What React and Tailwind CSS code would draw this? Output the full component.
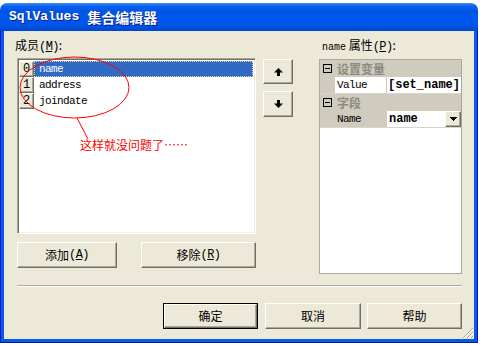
import React from "react";

const CJK = "font-['Noto_Sans_CJK_SC',sans-serif]";

function RaisedBtn({ className, children }) {
  return (
    <div
      className={
        "flex items-center justify-center bg-[#ECE9D8] border border-t-white border-l-white border-r-[#716F64] border-b-[#716F64] shadow-[inset_-1px_-1px_0_#ACA899] text-[12px] leading-[12px] text-black font-['Noto_Sans_CJK_SC',sans-serif] " +
        className
      }
    >
      {children}
    </div>
  );
}

function Mnemonic({ ch }) {
  return (
    <span className="font-['Liberation_Mono',monospace] text-[12px] tracking-[-0.6px]">
      (<span className="underline underline-offset-[1px]">{ch}</span>)
    </span>
  );
}

function IndexCell({ n }) {
  return (
    <div className="w-[15px] h-[16px] flex items-center justify-center bg-[#ECE9D8] border border-t-white border-l-white border-r-[#716F64] border-b-[#716F64] shadow-[inset_-1px_-1px_0_#ACA899] font-['Liberation_Mono',monospace] text-[12px] leading-[12px] text-black">
      {n}
    </div>
  );
}

function ListRow({ n, text, selected }) {
  return (
    <div className="flex h-[16px]">
      <IndexCell n={n} />
      {selected ? (
        <div className="w-[219px] h-[16px] bg-[#316AC5] border border-dotted border-[#F0D890] pl-[4px] flex items-center font-['Liberation_Mono',monospace] text-[11px] tracking-[-0.6px] text-white">
          {text}
        </div>
      ) : (
        <div className="w-[219px] h-[16px] pl-[5px] flex items-center font-['Liberation_Mono',monospace] text-[11px] tracking-[-0.6px] text-black">
          {text}
        </div>
      )}
    </div>
  );
}

function MinusBox() {
  return (
    <div className="w-[9px] h-[9px] border border-black flex items-center justify-center bg-[#CFCBBE]">
      <div className="w-[5px] h-[1px] bg-black" />
    </div>
  );
}

function CatRow({ children }) {
  return (
    <div className="h-[17px] bg-[#CFCBBE] flex items-center pl-[3px]">
      <MinusBox />
      <span className={`ml-[5px] ${CJK} font-bold text-[12px] leading-[12px] text-[#8C8A82]`}>{children}</span>
    </div>
  );
}

function ArrowIcon({ down }) {
  return (
    <svg width="9" height="8" viewBox="0 0 9 8">
      {down ? (
        <polygon points="3,0 6,0 6,3.5 9,3.5 4.5,8 0,3.5 3,3.5" fill="#000" />
      ) : (
        <polygon points="4.5,0 9,4.5 6,4.5 6,8 3,8 3,4.5 0,4.5" fill="#000" />
      )}
    </svg>
  );
}

export default function App() {
  return (
    <div className="relative w-[480px] h-[345px] bg-white overflow-hidden pt-[3px]">
      <div className="w-[478px] h-[340px] flex flex-col rounded-t-[7px] overflow-hidden">
        {/* title bar */}
        <div className="h-[28px] flex items-center pl-[9px] bg-[linear-gradient(to_bottom,#3D8FF8_0px,#0E62F0_3px,#0055E5_8px,#0058EE_18px,#0050E0_24px,#0046D0_28px)]">
          <span className="font-['Liberation_Mono',monospace] font-bold text-[13px] text-white [text-shadow:1px_1px_0_#0A1E8A]">
            SqlValues
          </span>
          <span className={`ml-[8px] ${CJK} font-bold text-[14px] leading-[14px] text-white [text-shadow:1px_1px_0_#0A1E8A]`}>
            集合编辑器
          </span>
        </div>
        {/* frame + client */}
        <div className="flex-1 px-[4px] pb-[4px] bg-[#0A58E8] shadow-[inset_1px_0_0_#0019CF,inset_-1px_0_0_#0019CF,inset_0_-1px_0_#001EA0]">
          <div className="relative h-[308px] bg-[#ECE9D8] pl-[13px] pr-[12px] pt-[8px] flex flex-col">
            <div className="flex items-start">
              {/* left column */}
              <div className="w-[239px] flex flex-col">
                <div className={`h-[19px] -ml-[2px] ${CJK} text-[12px] leading-[12px] text-black`}>
                  成员<Mnemonic ch="M" />:
                </div>
                <div className="h-[176px] bg-white border border-t-[#ACA899] border-l-[#ACA899] border-b-white border-r-white shadow-[inset_1px_1px_0_#716F64,inset_-1px_-1px_0_#F1EFE2] pl-[1px] pt-[2px]">
                  <ListRow n="0" text="name" selected />
                  <ListRow n="1" text="address" />
                  <ListRow n="2" text="joindate" />
                </div>
                <div className="mt-[8px] flex justify-between">
                  <RaisedBtn className="w-[100px] h-[26px]">
                    添加<Mnemonic ch="A" />
                  </RaisedBtn>
                  <RaisedBtn className="w-[115px] h-[26px]">
                    移除<Mnemonic ch="R" />
                  </RaisedBtn>
                </div>
              </div>
              {/* arrows */}
              <div className="ml-[7px] mt-[20px] flex flex-col gap-[7px]">
                <RaisedBtn className="w-[30px] h-[25px]">
                  <ArrowIcon />
                </RaisedBtn>
                <RaisedBtn className="w-[30px] h-[26px]">
                  <ArrowIcon down />
                </RaisedBtn>
              </div>
              {/* right column */}
              <div className="ml-[26px] w-[143px] flex flex-col">
                <div className={`h-[20px] pl-[3px] ${CJK} text-[12px] leading-[12px] text-black whitespace-nowrap`}>
                  <span className="font-['Liberation_Mono',monospace] text-[10px]">name</span>
                  {"\u00a0"}属性
                  <Mnemonic ch="P" />:
                </div>
                <div className="h-[215px] bg-white border border-[#ACA899] flex flex-col">
                  <CatRow>设置变量</CatRow>
                  <div className="h-[17px] flex border-b border-[#D8D5CA]">
                    <div className="w-[15px] bg-[#CFCBBE]" />
                    <div className="w-[51px] pl-[2px] flex items-center font-['Liberation_Mono',monospace] text-[11px] tracking-[-0.6px] text-black bg-white">
                      Value
                    </div>
                    <div className="w-[1px] bg-[#CFCBBE]" />
                    <div className="flex-1 pl-[1px] flex items-center font-['Liberation_Mono',monospace] font-bold text-[12px] text-black whitespace-nowrap overflow-hidden">
                      [set_name]
                    </div>
                  </div>
                  <CatRow>字段</CatRow>
                  <div className="h-[17px] flex border-b border-[#D8D5CA]">
                    <div className="w-[66px] pl-[17px] bg-[#CFCBBE] flex items-center font-['Liberation_Mono',monospace] text-[11px] tracking-[-0.6px] text-black">
                      Name
                    </div>
                    <div className="w-[1px] bg-[#CFCBBE]" />
                    <div className="flex-1 pl-[2px] flex items-center justify-between font-['Liberation_Mono',monospace] font-bold text-[12px] text-black">
                      <span>name</span>
                      <div className="w-[16px] h-[16px] flex items-center justify-center bg-[#ECE9D8] border border-t-white border-l-white border-r-[#716F64] border-b-[#716F64] shadow-[inset_-1px_-1px_0_#ACA899]">
                        <svg width="7" height="4" viewBox="0 0 7 4" shapeRendering="crispEdges">
                          <polygon points="0,0 7,0 3.5,4" fill="#000" />
                        </svg>
                      </div>
                    </div>
                  </div>
                </div>
              </div>
            </div>
            {/* separator */}
            <div className="mt-[11px] w-[445px] h-[2px] border-t border-t-[#ACA899] border-b border-b-white" />
            {/* bottom buttons */}
            <div className="mt-[16px] flex justify-end">
              <div className="border border-black">
                <RaisedBtn className="w-[93px] h-[24px]">确定</RaisedBtn>
              </div>
              <RaisedBtn className="ml-[7px] w-[96px] h-[26px]">取消</RaisedBtn>
              <RaisedBtn className="ml-[6px] w-[95px] h-[26px]">帮助</RaisedBtn>
            </div>
            {/* size grip */}
            <svg className="absolute right-0 bottom-0" width="12" height="12" viewBox="0 0 12 12" shapeRendering="crispEdges">
              <line x1="11" y1="1" x2="1" y2="11" stroke="#ACA899" />
              <line x1="11" y1="2" x2="2" y2="11" stroke="#FFFFFF" />
              <line x1="11" y1="5" x2="5" y2="11" stroke="#ACA899" />
              <line x1="11" y1="6" x2="6" y2="11" stroke="#FFFFFF" />
              <line x1="11" y1="9" x2="9" y2="11" stroke="#ACA899" />
            </svg>
          </div>
        </div>
      </div>
      {/* red annotation overlay */}
      <svg className="absolute left-0 top-0 pointer-events-none" width="480" height="345" viewBox="0 0 480 345">
        <ellipse cx="74.5" cy="87.5" rx="54.5" ry="30.5" fill="none" stroke="#FF0000" strokeWidth="1" />
        <line x1="77" y1="118" x2="88" y2="139" stroke="#FF0000" strokeWidth="1" />
      </svg>
      <div className={`absolute left-[80px] top-[139px] ${CJK} text-[12px] leading-[12px] text-[#FF0000] whitespace-nowrap`}>
        这样就没问题了……
      </div>
    </div>
  );
}
